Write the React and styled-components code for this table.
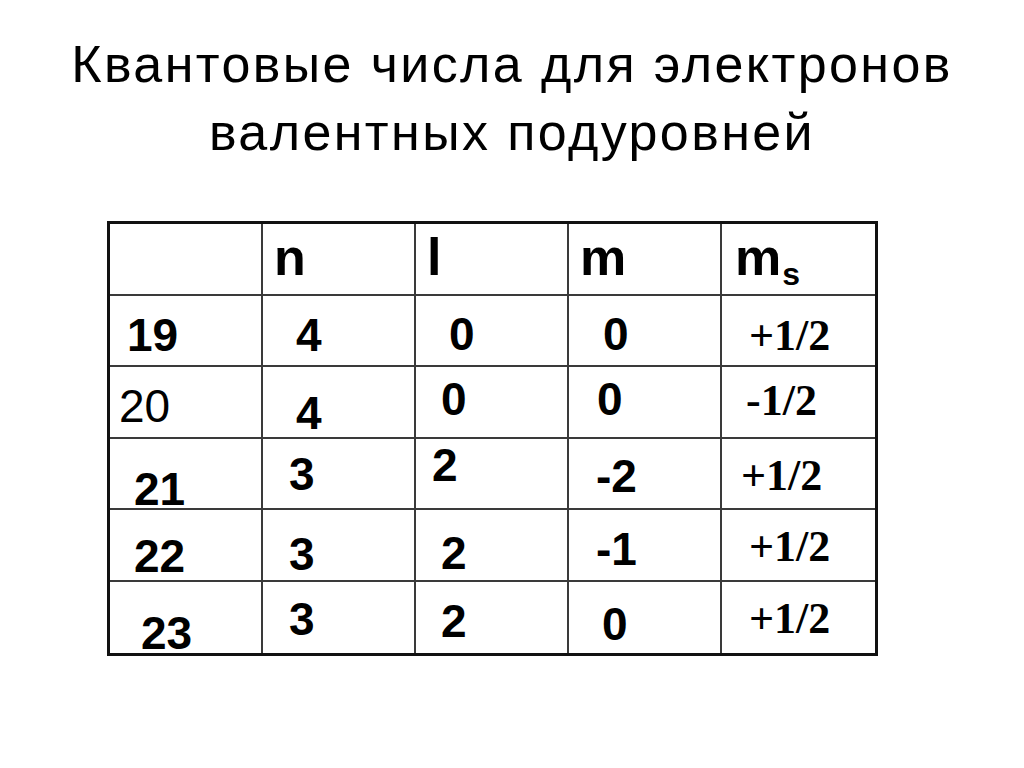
import React from 'react';
import styled, { createGlobalStyle, css } from 'styled-components';

const GlobalStyle = createGlobalStyle`
  html, body {
    margin: 0;
    padding: 0;
    background: #ffffff;
  }
`;

const Slide = styled.div`
  width: 1024px;
  height: 768px;
  overflow: hidden;
  background: #ffffff;
  font-family: 'Liberation Sans', Arial, sans-serif;
  color: #000;
`;

const Title = styled.h1`
  margin: 30px 0 0 0;
  font-size: 52px;
  font-weight: normal;
  line-height: 68px;
  letter-spacing: 2.4px;
  text-align: center;
  color: #000;
`;

const Table = styled.div`
  box-sizing: border-box;
  width: 771px;
  margin: 55px 0 0 107px;
  border: 3px solid #111;
  display: grid;
  grid-template-columns: repeat(5, 1fr);
  grid-auto-rows: 71.5px;
`;

// font presets for the different cell kinds
const fonts = {
  head: css`
    font-family: 'Liberation Sans', Arial, sans-serif;
    font-weight: bold;
    font-size: 52px;
  `,
  bold: css`
    font-family: 'Liberation Sans', Arial, sans-serif;
    font-weight: bold;
    font-size: 46px;
  `,
  regular: css`
    font-family: 'Liberation Sans', Arial, sans-serif;
    font-weight: normal;
    font-size: 46px;
  `,
  serif: css`
    font-family: 'Liberation Serif', 'Times New Roman', serif;
    font-weight: bold;
    font-size: 44px;
  `,
};

const Cell = styled.div`
  box-sizing: border-box;
  border-right: 2px solid #3a3a3a;
  border-bottom: 2px solid #3a3a3a;
  padding: ${p => p.$y}px 0 0 ${p => p.$x}px;
  line-height: 1;
  white-space: nowrap;
  ${p => fonts[p.$kind || 'bold']}

  &:nth-child(5n) {
    border-right: none;
  }
  &:nth-last-child(-n + 5) {
    border-bottom: none;
  }
`;

const Sub = styled.span`
  font-size: 32px;
  position: relative;
  top: 10px;
  margin-left: 1px;
`;

const header = [
  { text: '', x: 0, y: 0 },
  { text: 'n', x: 11, y: 7 },
  { text: 'l', x: 11, y: 7 },
  { text: 'm', x: 11, y: 7 },
  { text: 'm', sub: 's', x: 13, y: 7 },
];

// [text, x, y, kind]
const rows = [
  [
    ['19', 17, 16], ['4', 33, 16], ['0', 33, 15], ['0', 34, 15], ['+1/2', 27, 18, 'serif'],
  ],
  [
    ['20', 9, 16, 'regular'], ['4', 33, 23], ['0', 25, 9], ['0', 28, 9], ['-1/2', 24, 12, 'serif'],
  ],
  [
    ['21', 24, 27], ['3', 26, 12], ['2', 16, 3], ['-2', 27, 14], ['+1/2', 19, 15, 'serif'],
  ],
  [
    ['22', 24, 23], ['3', 26, 21], ['2', 25, 20], ['-1', 27, 16], ['+1/2', 27, 15, 'serif'],
  ],
  [
    ['23', 31, 28], ['3', 26, 14], ['2', 25, 16], ['0', 33, 19], ['+1/2', 27, 15, 'serif'],
  ],
];

export default function App() {
  return (
    <>
      <GlobalStyle />
      <Slide>
        <Title>
          Квантовые числа для электронов
          <br />
          валентных подуровней
        </Title>
        <Table>
          {header.map((h, i) => (
            <Cell key={`h${i}`} $kind="head" $x={h.x} $y={h.y}>
              {h.text}
              {h.sub && <Sub>{h.sub}</Sub>}
            </Cell>
          ))}
          {rows.map((row, r) =>
            row.map(([text, x, y, kind], c) => (
              <Cell key={`${r}-${c}`} $kind={kind} $x={x} $y={y}>
                {text}
              </Cell>
            ))
          )}
        </Table>
      </Slide>
    </>
  );
}
